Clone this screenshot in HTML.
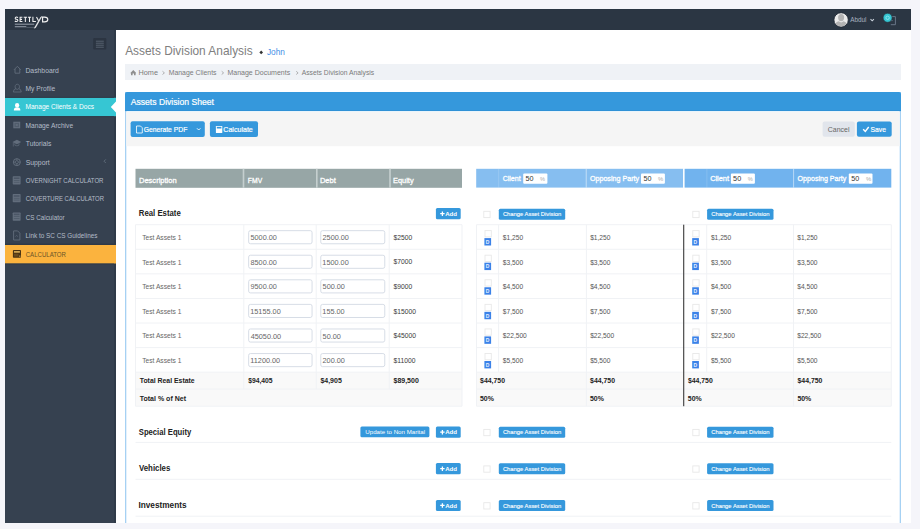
<!DOCTYPE html><html><head><meta charset="utf-8"><style>html,body{margin:0;padding:0;width:920px;height:529px;overflow:hidden;background:#f5f5fa;font-family:"Liberation Sans",sans-serif}</style></head><body><svg width="920" height="529" viewBox="0 0 920 529" style="display:block" font-family="Liberation Sans, sans-serif"><rect x="0.00" y="0.00" width="920.00" height="529.00" fill="#f5f5fa"/>
<rect x="5.00" y="9.00" width="906.00" height="21.00" fill="#2b3643"/>
<rect x="5.00" y="30.00" width="111.00" height="493.00" fill="#364150"/>
<rect x="114.00" y="30.00" width="2.00" height="493.00" fill="#2f3a48"/>
<rect x="116.00" y="30.00" width="795.00" height="493.00" fill="#ffffff"/>
<path d="M17.9 17.7 Q17.5 17.0 16.4 17.0 Q15.2 17.0 15.2 18.15 Q15.2 19.15 16.5 19.35 Q17.9 19.55 17.9 20.6 Q17.9 21.55 16.4 21.55 Q15.3 21.55 14.9 20.9 M22.4 17.3 H20.1 V21.4 H22.4 M20.1 19.35 H22 M23.7 17.3 H27 M25.35 17.3 V21.9 M27.9 17.3 H31.1 M29.5 17.3 V21.9 M32.9 16.8 V21.4 H35.9" stroke="#f2f2f2" stroke-width="1.05" fill="none"/>
<path d="M36.5 16.9 L38.5 20.7" stroke="#f2f2f2" stroke-width="1.1" fill="none"/>
<path d="M41.8 16.6 L40.9 16.9 L34.3 28.2 L35.6 27.6 Z" fill="#ffffff" stroke="#fff" stroke-width="0.5"/>
<path d="M42.6 17.1 H44.6 Q47.8 17.1 47.8 19.45 Q47.8 21.8 44.6 21.8 H42.6 Z" stroke="#f2f2f2" stroke-width="1.15" fill="none"/>
<rect x="14.80" y="23.60" width="19.40" height="1.30" fill="#7f8894"/>
<rect x="14.80" y="26.00" width="11.50" height="1.30" fill="#7f8894"/>
<rect x="26.30" y="27.10" width="7.90" height="0.50" fill="#6f7884"/>
<circle cx="841.1" cy="19.9" r="7.2" fill="#ebebeb" stroke="#1d2632" stroke-width="0.9"/>
<clipPath id="av"><circle cx="841.1" cy="19.9" r="6.6"/></clipPath>
<g clip-path="url(#av)" fill="#b3b3b3"><ellipse cx="841.1" cy="17.6" rx="3" ry="3.6"/><path d="M834 27.5 Q834.5 22.2 838.6 21.2 L841.1 22.6 L843.6 21.2 Q847.7 22.2 848.2 27.5 Z"/></g>
<text x="850.20" y="22.30" font-size="6.30" fill="#a9b3c1" textLength="16.13" lengthAdjust="spacingAndGlyphs">Abdul</text>
<path d="M870.5 19.1 L872.2 20.8 L873.9 19.1" stroke="#c8d0da" stroke-width="1.1" fill="none"/>
<path d="M890.8 16.6 H895.4 V24.7 H890.8 M892.6 20.6 H889.5" stroke="#6f7d8f" stroke-width="0.9" fill="none"/>
<circle cx="887.6" cy="17.8" r="4.5" fill="#36c6d3" stroke="#232d39" stroke-width="0.6"/>
<circle cx="887.6" cy="17.8" r="1.7" fill="none" stroke="#a8eef4" stroke-width="0.7"/>
<rect x="93.20" y="38.10" width="13.10" height="11.40" fill="#2c3542" rx="1.00"/>
<rect x="95.90" y="40.70" width="7.90" height="1.00" fill="#56616f"/>
<rect x="95.90" y="42.70" width="7.90" height="1.00" fill="#56616f"/>
<rect x="95.90" y="44.70" width="7.90" height="1.00" fill="#56616f"/>
<rect x="95.90" y="46.70" width="7.90" height="1.00" fill="#56616f"/>
<text x="25.46" y="72.50" font-size="6.70" fill="#b4bcc8" textLength="33.30" lengthAdjust="spacingAndGlyphs">Dashboard</text>
<text x="25.46" y="90.90" font-size="6.70" fill="#b4bcc8" textLength="29.78" lengthAdjust="spacingAndGlyphs">My Profile</text>
<rect x="5.00" y="97.80" width="111.00" height="18.40" fill="#36c6d3"/>
<text x="25.48" y="109.30" font-size="6.70" fill="#ffffff" textLength="68.55" lengthAdjust="spacingAndGlyphs">Manage Clients &amp; Docs</text>
<text x="25.47" y="127.70" font-size="6.70" fill="#b4bcc8" textLength="47.64" lengthAdjust="spacingAndGlyphs">Manage Archive</text>
<text x="25.87" y="146.10" font-size="6.70" fill="#b4bcc8" textLength="25.45" lengthAdjust="spacingAndGlyphs">Tutorials</text>
<text x="25.69" y="164.50" font-size="6.70" fill="#b4bcc8" textLength="23.96" lengthAdjust="spacingAndGlyphs">Support</text>
<text x="25.73" y="182.90" font-size="6.70" fill="#b4bcc8" textLength="77.75" lengthAdjust="spacingAndGlyphs">OVERNIGHT CALCULATOR</text>
<text x="25.70" y="201.30" font-size="6.70" fill="#b4bcc8" textLength="78.36" lengthAdjust="spacingAndGlyphs">COVERTURE CALCULATOR</text>
<text x="25.69" y="219.70" font-size="6.70" fill="#b4bcc8" textLength="38.84" lengthAdjust="spacingAndGlyphs">CS Calculator</text>
<text x="25.49" y="238.10" font-size="6.70" fill="#b4bcc8" textLength="72.02" lengthAdjust="spacingAndGlyphs">Link to SC CS Guidelines</text>
<rect x="5.00" y="245.00" width="111.00" height="18.50" fill="#fbb33e"/>
<text x="25.70" y="256.50" font-size="6.70" fill="#6b5428" textLength="40.29" lengthAdjust="spacingAndGlyphs">CALCULATOR</text>
<path d="M14 69.8 L17.4 66.3 L20.8 69.8 M15 69 V73.2 H19.8 V69" stroke="#626d7c" stroke-width="0.9" fill="none"/>
<path d="M17.3 84.2 A2.2 2.6 0 1 1 17.29 84.2 Z M13.3 92 Q13.6 88.9 15.9 88.7 M21.3 92 Q21 88.9 18.7 88.7 M13.3 92 H21.3" stroke="#626d7c" stroke-width="0.8" fill="none"/>
<ellipse cx="17.1" cy="105.2" rx="2.1" ry="2.2" fill="#fff"/><path d="M13.8 110.4 Q13.8 107.3 17.1 107.3 Q20.4 107.3 20.4 110.4 Z" fill="#fff"/>
<rect x="13.30" y="121.70" width="6.90" height="6.60" fill="#626d7c"/>
<rect x="14.50" y="122.90" width="4.50" height="4.20" fill="#505c6b"/>
<rect x="15.70" y="124.10" width="2.10" height="1.80" fill="#626d7c"/>
<path d="M12.5 142 L16.9 139.8 L21.3 142 L16.9 144.2 Z" fill="#626d7c"/><path d="M14.8 143.3 V145.2 Q16.9 146.5 19 145.2 V143.3 M13.3 142.3 V146.5" stroke="#626d7c" stroke-width="0.7" fill="none"/>
<circle cx="16.85" cy="162.15" r="3.5" fill="none" stroke="#626d7c" stroke-width="1"/><circle cx="16.85" cy="162.15" r="1.5" fill="none" stroke="#626d7c" stroke-width="0.8"/><path d="M16.85 158.6 V160.6 M16.85 163.7 V165.7 M13.3 162.15 H15.3 M18.4 162.15 H20.4" stroke="#626d7c" stroke-width="0.9"/>
<rect x="12.70" y="176.30" width="7.90" height="8.20" fill="#626d7c" rx="0.70"/>
<rect x="13.80" y="177.40" width="5.70" height="1.60" fill="#4b5666"/>
<rect x="13.80" y="180.10" width="5.70" height="0.70" fill="#4b5666"/>
<rect x="13.80" y="181.90" width="5.70" height="0.70" fill="#4b5666"/>
<rect x="12.70" y="194.10" width="7.90" height="8.20" fill="#626d7c" rx="0.70"/>
<rect x="13.80" y="195.20" width="5.70" height="1.60" fill="#4b5666"/>
<rect x="13.80" y="197.90" width="5.70" height="0.70" fill="#4b5666"/>
<rect x="13.80" y="199.70" width="5.70" height="0.70" fill="#4b5666"/>
<rect x="12.70" y="212.50" width="7.90" height="8.20" fill="#626d7c" rx="0.70"/>
<rect x="13.80" y="213.60" width="5.70" height="1.60" fill="#4b5666"/>
<rect x="13.80" y="216.30" width="5.70" height="0.70" fill="#4b5666"/>
<rect x="13.80" y="218.10" width="5.70" height="0.70" fill="#4b5666"/>
<path d="M13.6 230.9 H17.6 L19.9 233.2 V240 H13.6 Z" fill="none" stroke="#626d7c" stroke-width="0.9"/><path d="M15.4 236.5 Q16.5 234.5 17.8 236.5" stroke="#626d7c" stroke-width="0.7" fill="none"/>
<rect x="12.90" y="250.10" width="8.10" height="7.60" fill="#4a3414" rx="0.80"/>
<rect x="14.00" y="251.20" width="5.90" height="1.40" fill="#f0c060"/>
<rect x="14.00" y="253.70" width="4.50" height="2.90" fill="#6a4b1d"/>
<rect x="19.20" y="255.40" width="1.20" height="1.70" fill="#b08a3c"/>
<rect x="5.00" y="243.60" width="109.00" height="1.20" fill="#2e3846"/>
<rect x="5.00" y="96.80" width="109.00" height="1.00" fill="#2f3a48"/>
<rect x="5.00" y="116.20" width="109.00" height="0.90" fill="#2f3a48"/>
<rect x="5.00" y="263.60" width="109.00" height="0.90" fill="#2f3a48"/>
<path d="M116 101.5 L110.8 107 L116 112.5 Z" fill="#ffffff"/>
<path d="M105.8 159.4 L104 161.2 L105.8 163" stroke="#6f7b8a" stroke-width="0.7" fill="none"/>
<text x="125.20" y="54.70" font-size="13.50" fill="#808080" textLength="127.43" lengthAdjust="spacingAndGlyphs">Assets Division Analysis</text>
<rect x="259.9" y="51.1" width="2.6" height="2.6" fill="#333" transform="rotate(45 261.2 52.4)"/>
<text x="266.88" y="55.00" font-size="9.00" fill="#4490e6" textLength="17.99" lengthAdjust="spacingAndGlyphs">John</text>
<rect x="125.00" y="64.00" width="776.00" height="16.00" fill="#eff2f6"/>
<path d="M130.4 72.9 L133.3 70.1 L136.2 72.9 L135.6 73.4 V75.2 H134 V73.6 H132.6 V75.2 H131 V73.4 Z" fill="#8f8f8f"/>
<text x="138.52" y="74.70" font-size="7.20" fill="#7a7a7a" textLength="19.43" lengthAdjust="spacingAndGlyphs">Home</text>
<path d="M162.50 71.3 L164.40 72.9 L162.50 74.5" stroke="#9a9a9a" stroke-width="0.75" fill="none"/>
<text x="168.75" y="74.70" font-size="7.20" fill="#7a7a7a" textLength="47.78" lengthAdjust="spacingAndGlyphs">Manage Clients</text>
<path d="M221.70 71.3 L223.60 72.9 L221.70 74.5" stroke="#9a9a9a" stroke-width="0.75" fill="none"/>
<text x="227.44" y="74.70" font-size="7.20" fill="#7a7a7a" textLength="62.70" lengthAdjust="spacingAndGlyphs">Manage Documents</text>
<path d="M296.20 71.3 L298.10 72.9 L296.20 74.5" stroke="#9a9a9a" stroke-width="0.75" fill="none"/>
<text x="301.70" y="74.70" font-size="7.20" fill="#7a7a7a" textLength="72.45" lengthAdjust="spacingAndGlyphs">Assets Division Analysis</text>
<rect x="125.00" y="92.00" width="776.00" height="438.00" fill="#a6d1f3"/>
<rect x="126.30" y="111.00" width="773.40" height="419.00" fill="#ffffff"/>
<rect x="125.00" y="92.00" width="776.00" height="19.00" fill="#3598dc" rx="2.00"/>
<rect x="125.00" y="100.00" width="776.00" height="11.00" fill="#3598dc"/>
<text x="130.70" y="105.00" font-size="9.00" fill="#ffffff" textLength="83.25" lengthAdjust="spacingAndGlyphs" stroke="#fff" stroke-width="0.2">Assets Division Sheet</text>
<rect x="125.00" y="110.20" width="776.00" height="0.90" fill="#2f8fd5"/>
<rect x="126.30" y="112.00" width="773.40" height="34.20" fill="#f5f5f5"/>
<rect x="130.60" y="121.20" width="74.20" height="15.70" fill="#3598dc" rx="2.00"/>
<text x="143.66" y="132.10" font-size="7.80" fill="#fff" textLength="43.63" lengthAdjust="spacingAndGlyphs" stroke="#fff" stroke-width="0.2">Generate PDF</text>
<path d="M136.5 126 H140.5 L142.3 127.8 V133 H136.5 Z" fill="none" stroke="#fff" stroke-width="0.8"/>
<path d="M197 128.3 L198.7 130 L200.4 128.3" stroke="#fff" stroke-width="0.9" fill="none"/>
<rect x="209.90" y="121.20" width="48.10" height="15.70" fill="#3598dc" rx="2.00"/>
<rect x="215.90" y="126.00" width="6.40" height="7.00" fill="#fff" rx="0.60"/>
<rect x="216.80" y="126.80" width="4.60" height="1.70" fill="#3598dc"/>
<text x="223.35" y="132.10" font-size="7.80" fill="#fff" textLength="29.46" lengthAdjust="spacingAndGlyphs" stroke="#fff" stroke-width="0.2">Calculate</text>
<rect x="822.60" y="121.50" width="32.20" height="15.30" fill="#e1e5ec" rx="2.00"/>
<text x="827.85" y="132.00" font-size="7.50" fill="#666666" textLength="21.62" lengthAdjust="spacingAndGlyphs">Cancel</text>
<rect x="856.90" y="121.50" width="34.80" height="15.30" fill="#3598dc" rx="2.00"/>
<path d="M863.2 129.2 L865.3 131.4 L868.7 127" stroke="#fff" stroke-width="1.4" fill="none"/>
<text x="870.50" y="132.00" font-size="7.50" fill="#fff" textLength="15.40" lengthAdjust="spacingAndGlyphs" stroke="#fff" stroke-width="0.2">Save</text>
<rect x="135.50" y="168.80" width="326.50" height="19.00" fill="#97a6a6"/>
<rect x="242.70" y="168.80" width="1.60" height="19.00" fill="#c5cfcf"/>
<rect x="316.00" y="168.80" width="1.60" height="19.00" fill="#c5cfcf"/>
<rect x="389.20" y="168.80" width="1.60" height="19.00" fill="#c5cfcf"/>
<text x="139.00" y="182.50" font-size="7.60" fill="#fff" textLength="37.61" lengthAdjust="spacingAndGlyphs" stroke="#fff" stroke-width="0.3">Description</text>
<text x="247.86" y="182.50" font-size="7.60" fill="#fff" textLength="14.28" lengthAdjust="spacingAndGlyphs" stroke="#fff" stroke-width="0.3">FMV</text>
<text x="319.90" y="182.50" font-size="7.60" fill="#fff" textLength="15.96" lengthAdjust="spacingAndGlyphs" stroke="#fff" stroke-width="0.3">Debt</text>
<text x="393.01" y="182.50" font-size="7.60" fill="#fff" textLength="20.59" lengthAdjust="spacingAndGlyphs" stroke="#fff" stroke-width="0.3">Equity</text>
<rect x="476.20" y="168.80" width="207.00" height="18.80" fill="#86bef0"/>
<rect x="498.30" y="168.80" width="0.80" height="18.80" fill="rgba(255,255,255,0.18)"/>
<rect x="585.70" y="168.80" width="1.10" height="18.80" fill="rgba(255,255,255,0.45)"/>
<text x="502.65" y="180.60" font-size="7.40" fill="#fff" textLength="18.00" lengthAdjust="spacingAndGlyphs" stroke="#fff" stroke-width="0.3">Client</text>
<rect x="523.20" y="173.40" width="24.20" height="10.30" fill="#fff" rx="1.00"/>
<text x="525.41" y="181.20" font-size="6.80" fill="#333" textLength="8.06" lengthAdjust="spacingAndGlyphs">50</text>
<text x="540.00" y="181.20" font-size="5.50" fill="#aaa" textLength="4.99" lengthAdjust="spacingAndGlyphs">%</text>
<text x="589.88" y="180.60" font-size="7.40" fill="#fff" textLength="49.31" lengthAdjust="spacingAndGlyphs" stroke="#fff" stroke-width="0.3">Opposing Party</text>
<rect x="641.00" y="173.40" width="23.90" height="10.30" fill="#fff" rx="1.00"/>
<text x="643.41" y="181.20" font-size="6.80" fill="#333" textLength="7.95" lengthAdjust="spacingAndGlyphs">50</text>
<text x="658.10" y="181.20" font-size="5.50" fill="#aaa" textLength="5.20" lengthAdjust="spacingAndGlyphs">%</text>
<rect x="683.20" y="168.80" width="1.40" height="18.80" fill="#ffffff"/>
<rect x="684.60" y="168.80" width="206.70" height="18.80" fill="#71b3ee"/>
<rect x="706.50" y="168.80" width="0.80" height="18.80" fill="rgba(255,255,255,0.18)"/>
<rect x="793.00" y="168.80" width="1.10" height="18.80" fill="rgba(255,255,255,0.45)"/>
<text x="710.13" y="180.60" font-size="7.40" fill="#fff" textLength="18.92" lengthAdjust="spacingAndGlyphs" stroke="#fff" stroke-width="0.3">Client</text>
<rect x="730.90" y="173.40" width="24.00" height="10.30" fill="#fff" rx="1.00"/>
<text x="733.11" y="181.20" font-size="6.80" fill="#333" textLength="8.06" lengthAdjust="spacingAndGlyphs">50</text>
<text x="747.70" y="181.20" font-size="5.50" fill="#aaa" textLength="4.99" lengthAdjust="spacingAndGlyphs">%</text>
<text x="797.58" y="180.60" font-size="7.40" fill="#fff" textLength="48.80" lengthAdjust="spacingAndGlyphs" stroke="#fff" stroke-width="0.3">Opposing Party</text>
<rect x="848.80" y="173.40" width="23.70" height="10.30" fill="#fff" rx="1.00"/>
<text x="851.21" y="181.20" font-size="6.80" fill="#333" textLength="7.95" lengthAdjust="spacingAndGlyphs">50</text>
<text x="865.90" y="181.20" font-size="5.50" fill="#aaa" textLength="5.20" lengthAdjust="spacingAndGlyphs">%</text>
<text x="138.79" y="216.00" font-size="8.20" fill="#222" font-weight="bold" textLength="41.99" lengthAdjust="spacingAndGlyphs">Real Estate</text>
<rect x="435.90" y="208.10" width="24.80" height="11.10" fill="#3598dc" rx="1.50"/>
<path d="M442.4 211.40 V215.90 M440.2 213.65 H444.6" stroke="#fff" stroke-width="1.3"/>
<text x="445.15" y="215.70" font-size="6.20" fill="#fff" font-weight="bold" textLength="11.84" lengthAdjust="spacingAndGlyphs">Add</text>
<rect x="483.80" y="211.30" width="6.3" height="6.3" fill="#fff" stroke="#e8e8e8" stroke-width="0.9"/>
<rect x="498.80" y="208.70" width="66.40" height="11.10" fill="#3598dc" rx="1.50"/>
<text x="502.91" y="216.40" font-size="6.20" fill="#fff" textLength="58.27" lengthAdjust="spacingAndGlyphs" stroke="#fff" stroke-width="0.12">Change Asset Division</text>
<rect x="692.80" y="211.30" width="6.3" height="6.3" fill="#fff" stroke="#e8e8e8" stroke-width="0.9"/>
<rect x="707.10" y="208.70" width="66.40" height="11.10" fill="#3598dc" rx="1.50"/>
<text x="711.21" y="216.40" font-size="6.20" fill="#fff" textLength="58.27" lengthAdjust="spacingAndGlyphs" stroke="#fff" stroke-width="0.12">Change Asset Division</text>
<rect x="135.50" y="372.20" width="326.50" height="34.00" fill="#f9f9f9"/>
<rect x="476.50" y="372.20" width="414.80" height="34.00" fill="#f9f9f9"/>
<rect x="135.50" y="224.20" width="326.50" height="1.00" fill="#f0f2f5"/>
<rect x="476.50" y="224.20" width="414.80" height="1.00" fill="#f0f2f5"/>
<rect x="135.50" y="248.78" width="326.50" height="1.00" fill="#f0f2f5"/>
<rect x="476.50" y="248.78" width="414.80" height="1.00" fill="#f0f2f5"/>
<rect x="135.50" y="273.36" width="326.50" height="1.00" fill="#f0f2f5"/>
<rect x="476.50" y="273.36" width="414.80" height="1.00" fill="#f0f2f5"/>
<rect x="135.50" y="297.94" width="326.50" height="1.00" fill="#f0f2f5"/>
<rect x="476.50" y="297.94" width="414.80" height="1.00" fill="#f0f2f5"/>
<rect x="135.50" y="322.52" width="326.50" height="1.00" fill="#f0f2f5"/>
<rect x="476.50" y="322.52" width="414.80" height="1.00" fill="#f0f2f5"/>
<rect x="135.50" y="347.10" width="326.50" height="1.00" fill="#f0f2f5"/>
<rect x="476.50" y="347.10" width="414.80" height="1.00" fill="#f0f2f5"/>
<rect x="135.50" y="371.68" width="326.50" height="1.00" fill="#f0f2f5"/>
<rect x="476.50" y="371.68" width="414.80" height="1.00" fill="#f0f2f5"/>
<rect x="135.50" y="388.60" width="326.50" height="1.00" fill="#f0f2f5"/>
<rect x="476.50" y="388.60" width="414.80" height="1.00" fill="#f0f2f5"/>
<rect x="135.50" y="405.70" width="326.50" height="1.00" fill="#f0f2f5"/>
<rect x="476.50" y="405.70" width="414.80" height="1.00" fill="#f0f2f5"/>
<rect x="135.00" y="224.70" width="1.00" height="181.50" fill="#f0f2f5"/>
<rect x="461.50" y="224.70" width="1.00" height="181.50" fill="#f0f2f5"/>
<rect x="243.30" y="224.70" width="1.00" height="164.40" fill="#f0f2f5"/>
<rect x="315.70" y="224.70" width="1.00" height="164.40" fill="#f0f2f5"/>
<rect x="388.70" y="224.70" width="1.00" height="164.40" fill="#f0f2f5"/>
<rect x="476.00" y="224.70" width="1.00" height="181.50" fill="#f0f2f5"/>
<rect x="890.80" y="224.70" width="1.00" height="181.50" fill="#f0f2f5"/>
<rect x="585.90" y="224.70" width="1.00" height="181.50" fill="#f0f2f5"/>
<rect x="793.00" y="224.70" width="1.00" height="181.50" fill="#f0f2f5"/>
<rect x="498.10" y="224.70" width="1.00" height="147.50" fill="#f0f2f5"/>
<rect x="706.20" y="224.70" width="1.00" height="147.50" fill="#f0f2f5"/>
<text x="142.27" y="240.00" font-size="7.10" fill="#666" textLength="39.14" lengthAdjust="spacingAndGlyphs">Test Assets 1</text>
<rect x="248.65" y="230.65" width="63.40" height="13.1" rx="1.8" fill="#fff" stroke="#d3d9e3" stroke-width="0.9"/>
<text x="250.51" y="240.30" font-size="7.30" fill="#666" textLength="26.39" lengthAdjust="spacingAndGlyphs">5000.00</text>
<rect x="320.75" y="230.65" width="64.00" height="13.1" rx="1.8" fill="#fff" stroke="#d3d9e3" stroke-width="0.9"/>
<text x="322.54" y="240.30" font-size="7.30" fill="#666" textLength="26.39" lengthAdjust="spacingAndGlyphs">2500.00</text>
<text x="393.53" y="239.80" font-size="7.10" fill="#3a3a3a" textLength="18.76" lengthAdjust="spacingAndGlyphs">$2500</text>
<rect x="485.00" y="230.60" width="6.3" height="6.3" fill="#fff" stroke="#e8e8e8" stroke-width="0.9"/>
<rect x="484.40" y="238.10" width="6.70" height="7.40" fill="#3b82e8"/>
<text x="485.77" y="243.80" font-size="4.60" fill="#e8f0ff" font-weight="bold" textLength="3.64" lengthAdjust="spacingAndGlyphs">D</text>
<text x="502.83" y="240.00" font-size="7.10" fill="#555" textLength="20.30" lengthAdjust="spacingAndGlyphs">$1,250</text>
<text x="590.13" y="240.00" font-size="7.10" fill="#555" textLength="20.30" lengthAdjust="spacingAndGlyphs">$1,250</text>
<rect x="692.80" y="230.60" width="6.3" height="6.3" fill="#fff" stroke="#e8e8e8" stroke-width="0.9"/>
<rect x="692.20" y="238.10" width="6.70" height="7.40" fill="#3b82e8"/>
<text x="693.57" y="243.80" font-size="4.60" fill="#e8f0ff" font-weight="bold" textLength="3.64" lengthAdjust="spacingAndGlyphs">D</text>
<text x="710.93" y="240.00" font-size="7.10" fill="#555" textLength="20.30" lengthAdjust="spacingAndGlyphs">$1,250</text>
<text x="797.23" y="240.00" font-size="7.10" fill="#555" textLength="20.30" lengthAdjust="spacingAndGlyphs">$1,250</text>
<text x="142.27" y="264.58" font-size="7.10" fill="#666" textLength="39.14" lengthAdjust="spacingAndGlyphs">Test Assets 1</text>
<rect x="248.65" y="255.23" width="63.40" height="13.1" rx="1.8" fill="#fff" stroke="#d3d9e3" stroke-width="0.9"/>
<text x="250.47" y="264.88" font-size="7.30" fill="#666" textLength="26.39" lengthAdjust="spacingAndGlyphs">8500.00</text>
<rect x="320.75" y="255.23" width="64.00" height="13.1" rx="1.8" fill="#fff" stroke="#d3d9e3" stroke-width="0.9"/>
<text x="322.35" y="264.88" font-size="7.30" fill="#666" textLength="26.39" lengthAdjust="spacingAndGlyphs">1500.00</text>
<text x="393.53" y="264.38" font-size="7.10" fill="#3a3a3a" textLength="18.76" lengthAdjust="spacingAndGlyphs">$7000</text>
<rect x="485.00" y="255.18" width="6.3" height="6.3" fill="#fff" stroke="#e8e8e8" stroke-width="0.9"/>
<rect x="484.40" y="262.68" width="6.70" height="7.40" fill="#3b82e8"/>
<text x="485.77" y="268.38" font-size="4.60" fill="#e8f0ff" font-weight="bold" textLength="3.64" lengthAdjust="spacingAndGlyphs">D</text>
<text x="502.83" y="264.58" font-size="7.10" fill="#555" textLength="20.30" lengthAdjust="spacingAndGlyphs">$3,500</text>
<text x="590.13" y="264.58" font-size="7.10" fill="#555" textLength="20.30" lengthAdjust="spacingAndGlyphs">$3,500</text>
<rect x="692.80" y="255.18" width="6.3" height="6.3" fill="#fff" stroke="#e8e8e8" stroke-width="0.9"/>
<rect x="692.20" y="262.68" width="6.70" height="7.40" fill="#3b82e8"/>
<text x="693.57" y="268.38" font-size="4.60" fill="#e8f0ff" font-weight="bold" textLength="3.64" lengthAdjust="spacingAndGlyphs">D</text>
<text x="710.93" y="264.58" font-size="7.10" fill="#555" textLength="20.30" lengthAdjust="spacingAndGlyphs">$3,500</text>
<text x="797.23" y="264.58" font-size="7.10" fill="#555" textLength="20.30" lengthAdjust="spacingAndGlyphs">$3,500</text>
<text x="142.27" y="289.16" font-size="7.10" fill="#666" textLength="39.14" lengthAdjust="spacingAndGlyphs">Test Assets 1</text>
<rect x="248.65" y="279.81" width="63.40" height="13.1" rx="1.8" fill="#fff" stroke="#d3d9e3" stroke-width="0.9"/>
<text x="250.47" y="289.46" font-size="7.30" fill="#666" textLength="26.39" lengthAdjust="spacingAndGlyphs">9500.00</text>
<rect x="320.75" y="279.81" width="64.00" height="13.1" rx="1.8" fill="#fff" stroke="#d3d9e3" stroke-width="0.9"/>
<text x="322.61" y="289.46" font-size="7.30" fill="#666" textLength="22.33" lengthAdjust="spacingAndGlyphs">500.00</text>
<text x="393.53" y="288.96" font-size="7.10" fill="#3a3a3a" textLength="18.76" lengthAdjust="spacingAndGlyphs">$9000</text>
<rect x="485.00" y="279.76" width="6.3" height="6.3" fill="#fff" stroke="#e8e8e8" stroke-width="0.9"/>
<rect x="484.40" y="287.26" width="6.70" height="7.40" fill="#3b82e8"/>
<text x="485.77" y="292.96" font-size="4.60" fill="#e8f0ff" font-weight="bold" textLength="3.64" lengthAdjust="spacingAndGlyphs">D</text>
<text x="502.83" y="289.16" font-size="7.10" fill="#555" textLength="20.30" lengthAdjust="spacingAndGlyphs">$4,500</text>
<text x="590.13" y="289.16" font-size="7.10" fill="#555" textLength="20.30" lengthAdjust="spacingAndGlyphs">$4,500</text>
<rect x="692.80" y="279.76" width="6.3" height="6.3" fill="#fff" stroke="#e8e8e8" stroke-width="0.9"/>
<rect x="692.20" y="287.26" width="6.70" height="7.40" fill="#3b82e8"/>
<text x="693.57" y="292.96" font-size="4.60" fill="#e8f0ff" font-weight="bold" textLength="3.64" lengthAdjust="spacingAndGlyphs">D</text>
<text x="710.93" y="289.16" font-size="7.10" fill="#555" textLength="20.30" lengthAdjust="spacingAndGlyphs">$4,500</text>
<text x="797.23" y="289.16" font-size="7.10" fill="#555" textLength="20.30" lengthAdjust="spacingAndGlyphs">$4,500</text>
<text x="142.27" y="313.74" font-size="7.10" fill="#666" textLength="39.14" lengthAdjust="spacingAndGlyphs">Test Assets 1</text>
<rect x="248.65" y="304.39" width="63.40" height="13.1" rx="1.8" fill="#fff" stroke="#d3d9e3" stroke-width="0.9"/>
<text x="250.25" y="314.04" font-size="7.30" fill="#666" textLength="30.45" lengthAdjust="spacingAndGlyphs">15155.00</text>
<rect x="320.75" y="304.39" width="64.00" height="13.1" rx="1.8" fill="#fff" stroke="#d3d9e3" stroke-width="0.9"/>
<text x="322.35" y="314.04" font-size="7.30" fill="#666" textLength="22.33" lengthAdjust="spacingAndGlyphs">155.00</text>
<text x="393.53" y="313.54" font-size="7.10" fill="#3a3a3a" textLength="22.51" lengthAdjust="spacingAndGlyphs">$15000</text>
<rect x="485.00" y="304.34" width="6.3" height="6.3" fill="#fff" stroke="#e8e8e8" stroke-width="0.9"/>
<rect x="484.40" y="311.84" width="6.70" height="7.40" fill="#3b82e8"/>
<text x="485.77" y="317.54" font-size="4.60" fill="#e8f0ff" font-weight="bold" textLength="3.64" lengthAdjust="spacingAndGlyphs">D</text>
<text x="502.83" y="313.74" font-size="7.10" fill="#555" textLength="20.30" lengthAdjust="spacingAndGlyphs">$7,500</text>
<text x="590.13" y="313.74" font-size="7.10" fill="#555" textLength="20.30" lengthAdjust="spacingAndGlyphs">$7,500</text>
<rect x="692.80" y="304.34" width="6.3" height="6.3" fill="#fff" stroke="#e8e8e8" stroke-width="0.9"/>
<rect x="692.20" y="311.84" width="6.70" height="7.40" fill="#3b82e8"/>
<text x="693.57" y="317.54" font-size="4.60" fill="#e8f0ff" font-weight="bold" textLength="3.64" lengthAdjust="spacingAndGlyphs">D</text>
<text x="710.93" y="313.74" font-size="7.10" fill="#555" textLength="20.30" lengthAdjust="spacingAndGlyphs">$7,500</text>
<text x="797.23" y="313.74" font-size="7.10" fill="#555" textLength="20.30" lengthAdjust="spacingAndGlyphs">$7,500</text>
<text x="142.27" y="338.32" font-size="7.10" fill="#666" textLength="39.14" lengthAdjust="spacingAndGlyphs">Test Assets 1</text>
<rect x="248.65" y="328.97" width="63.40" height="13.1" rx="1.8" fill="#fff" stroke="#d3d9e3" stroke-width="0.9"/>
<text x="250.65" y="338.62" font-size="7.30" fill="#666" textLength="30.45" lengthAdjust="spacingAndGlyphs">45050.00</text>
<rect x="320.75" y="328.97" width="64.00" height="13.1" rx="1.8" fill="#fff" stroke="#d3d9e3" stroke-width="0.9"/>
<text x="322.61" y="338.62" font-size="7.30" fill="#666" textLength="18.27" lengthAdjust="spacingAndGlyphs">50.00</text>
<text x="393.53" y="338.12" font-size="7.10" fill="#3a3a3a" textLength="22.51" lengthAdjust="spacingAndGlyphs">$45000</text>
<rect x="485.00" y="328.92" width="6.3" height="6.3" fill="#fff" stroke="#e8e8e8" stroke-width="0.9"/>
<rect x="484.40" y="336.42" width="6.70" height="7.40" fill="#3b82e8"/>
<text x="485.77" y="342.12" font-size="4.60" fill="#e8f0ff" font-weight="bold" textLength="3.64" lengthAdjust="spacingAndGlyphs">D</text>
<text x="502.83" y="338.32" font-size="7.10" fill="#555" textLength="24.00" lengthAdjust="spacingAndGlyphs">$22,500</text>
<text x="590.13" y="338.32" font-size="7.10" fill="#555" textLength="24.00" lengthAdjust="spacingAndGlyphs">$22,500</text>
<rect x="692.80" y="328.92" width="6.3" height="6.3" fill="#fff" stroke="#e8e8e8" stroke-width="0.9"/>
<rect x="692.20" y="336.42" width="6.70" height="7.40" fill="#3b82e8"/>
<text x="693.57" y="342.12" font-size="4.60" fill="#e8f0ff" font-weight="bold" textLength="3.64" lengthAdjust="spacingAndGlyphs">D</text>
<text x="710.93" y="338.32" font-size="7.10" fill="#555" textLength="24.00" lengthAdjust="spacingAndGlyphs">$22,500</text>
<text x="797.23" y="338.32" font-size="7.10" fill="#555" textLength="24.00" lengthAdjust="spacingAndGlyphs">$22,500</text>
<text x="142.27" y="362.90" font-size="7.10" fill="#666" textLength="39.14" lengthAdjust="spacingAndGlyphs">Test Assets 1</text>
<rect x="248.65" y="353.55" width="63.40" height="13.1" rx="1.8" fill="#fff" stroke="#d3d9e3" stroke-width="0.9"/>
<text x="250.25" y="363.20" font-size="7.30" fill="#666" textLength="29.91" lengthAdjust="spacingAndGlyphs">11200.00</text>
<rect x="320.75" y="353.55" width="64.00" height="13.1" rx="1.8" fill="#fff" stroke="#d3d9e3" stroke-width="0.9"/>
<text x="322.54" y="363.20" font-size="7.30" fill="#666" textLength="22.33" lengthAdjust="spacingAndGlyphs">200.00</text>
<text x="393.53" y="362.70" font-size="7.10" fill="#3a3a3a" textLength="22.01" lengthAdjust="spacingAndGlyphs">$11000</text>
<rect x="485.00" y="353.50" width="6.3" height="6.3" fill="#fff" stroke="#e8e8e8" stroke-width="0.9"/>
<rect x="484.40" y="361.00" width="6.70" height="7.40" fill="#3b82e8"/>
<text x="485.77" y="366.70" font-size="4.60" fill="#e8f0ff" font-weight="bold" textLength="3.64" lengthAdjust="spacingAndGlyphs">D</text>
<text x="502.83" y="362.90" font-size="7.10" fill="#555" textLength="20.30" lengthAdjust="spacingAndGlyphs">$5,500</text>
<text x="590.13" y="362.90" font-size="7.10" fill="#555" textLength="20.30" lengthAdjust="spacingAndGlyphs">$5,500</text>
<rect x="692.80" y="353.50" width="6.3" height="6.3" fill="#fff" stroke="#e8e8e8" stroke-width="0.9"/>
<rect x="692.20" y="361.00" width="6.70" height="7.40" fill="#3b82e8"/>
<text x="693.57" y="366.70" font-size="4.60" fill="#e8f0ff" font-weight="bold" textLength="3.64" lengthAdjust="spacingAndGlyphs">D</text>
<text x="710.93" y="362.90" font-size="7.10" fill="#555" textLength="20.30" lengthAdjust="spacingAndGlyphs">$5,500</text>
<text x="797.23" y="362.90" font-size="7.10" fill="#555" textLength="20.30" lengthAdjust="spacingAndGlyphs">$5,500</text>
<rect x="683.00" y="224.70" width="1.30" height="181.50" fill="#575757"/>
<text x="139.73" y="383.40" font-size="7.00" fill="#222" font-weight="bold" textLength="54.90" lengthAdjust="spacingAndGlyphs">Total Real Estate</text>
<text x="139.73" y="400.50" font-size="7.00" fill="#222" font-weight="bold" textLength="46.26" lengthAdjust="spacingAndGlyphs">Total % of Net</text>
<text x="248.20" y="383.40" font-size="7.00" fill="#222" font-weight="bold" textLength="24.37" lengthAdjust="spacingAndGlyphs">$94,405</text>
<text x="320.39" y="383.40" font-size="7.00" fill="#222" font-weight="bold" textLength="21.41" lengthAdjust="spacingAndGlyphs">$4,905</text>
<text x="393.50" y="383.40" font-size="7.00" fill="#222" font-weight="bold" textLength="25.30" lengthAdjust="spacingAndGlyphs">$89,500</text>
<text x="480.10" y="383.40" font-size="7.00" fill="#222" font-weight="bold" textLength="24.88" lengthAdjust="spacingAndGlyphs">$44,750</text>
<text x="590.10" y="383.40" font-size="7.00" fill="#222" font-weight="bold" textLength="24.88" lengthAdjust="spacingAndGlyphs">$44,750</text>
<text x="479.99" y="400.60" font-size="7.00" fill="#222" font-weight="bold" textLength="13.89" lengthAdjust="spacingAndGlyphs">50%</text>
<text x="589.99" y="400.60" font-size="7.00" fill="#222" font-weight="bold" textLength="13.89" lengthAdjust="spacingAndGlyphs">50%</text>
<text x="687.90" y="383.40" font-size="7.00" fill="#222" font-weight="bold" textLength="24.88" lengthAdjust="spacingAndGlyphs">$44,750</text>
<text x="797.50" y="383.40" font-size="7.00" fill="#222" font-weight="bold" textLength="24.88" lengthAdjust="spacingAndGlyphs">$44,750</text>
<text x="687.79" y="400.60" font-size="7.00" fill="#222" font-weight="bold" textLength="13.89" lengthAdjust="spacingAndGlyphs">50%</text>
<text x="797.39" y="400.60" font-size="7.00" fill="#222" font-weight="bold" textLength="13.89" lengthAdjust="spacingAndGlyphs">50%</text>
<text x="138.77" y="434.70" font-size="8.20" fill="#222" font-weight="bold" textLength="52.47" lengthAdjust="spacingAndGlyphs">Special Equity</text>
<rect x="135.50" y="441.90" width="755.80" height="1.00" fill="#f0f2f5"/>
<rect x="435.90" y="426.60" width="24.80" height="11.10" fill="#3598dc" rx="1.50"/>
<path d="M442.4 429.90 V434.40 M440.2 432.15 H444.6" stroke="#fff" stroke-width="1.3"/>
<text x="445.15" y="434.20" font-size="6.20" fill="#fff" font-weight="bold" textLength="11.84" lengthAdjust="spacingAndGlyphs">Add</text>
<rect x="360.40" y="426.60" width="69.00" height="10.60" fill="#3598dc" rx="1.50"/>
<text x="365.34" y="434.10" font-size="6.20" fill="#fff" textLength="59.77" lengthAdjust="spacingAndGlyphs">Update to Non Marital</text>
<rect x="483.80" y="429.40" width="6.3" height="6.3" fill="#fff" stroke="#e8e8e8" stroke-width="0.9"/>
<rect x="498.80" y="426.70" width="66.40" height="11.10" fill="#3598dc" rx="1.50"/>
<text x="502.91" y="434.40" font-size="6.20" fill="#fff" textLength="58.27" lengthAdjust="spacingAndGlyphs" stroke="#fff" stroke-width="0.12">Change Asset Division</text>
<rect x="692.80" y="429.40" width="6.3" height="6.3" fill="#fff" stroke="#e8e8e8" stroke-width="0.9"/>
<rect x="707.10" y="426.70" width="66.40" height="11.10" fill="#3598dc" rx="1.50"/>
<text x="711.21" y="434.40" font-size="6.20" fill="#fff" textLength="58.27" lengthAdjust="spacingAndGlyphs" stroke="#fff" stroke-width="0.12">Change Asset Division</text>
<text x="138.96" y="471.20" font-size="8.20" fill="#222" font-weight="bold" textLength="31.38" lengthAdjust="spacingAndGlyphs">Vehicles</text>
<rect x="135.50" y="478.80" width="755.80" height="1.00" fill="#f0f2f5"/>
<rect x="435.90" y="463.10" width="24.80" height="11.10" fill="#3598dc" rx="1.50"/>
<path d="M442.4 466.40 V470.90 M440.2 468.65 H444.6" stroke="#fff" stroke-width="1.3"/>
<text x="445.15" y="470.70" font-size="6.20" fill="#fff" font-weight="bold" textLength="11.84" lengthAdjust="spacingAndGlyphs">Add</text>
<rect x="483.80" y="465.90" width="6.3" height="6.3" fill="#fff" stroke="#e8e8e8" stroke-width="0.9"/>
<rect x="498.80" y="463.20" width="66.40" height="11.10" fill="#3598dc" rx="1.50"/>
<text x="502.91" y="470.90" font-size="6.20" fill="#fff" textLength="58.27" lengthAdjust="spacingAndGlyphs" stroke="#fff" stroke-width="0.12">Change Asset Division</text>
<rect x="692.80" y="465.90" width="6.3" height="6.3" fill="#fff" stroke="#e8e8e8" stroke-width="0.9"/>
<rect x="707.10" y="463.20" width="66.40" height="11.10" fill="#3598dc" rx="1.50"/>
<text x="711.21" y="470.90" font-size="6.20" fill="#fff" textLength="58.27" lengthAdjust="spacingAndGlyphs" stroke="#fff" stroke-width="0.12">Change Asset Division</text>
<text x="138.46" y="508.00" font-size="8.20" fill="#222" font-weight="bold" textLength="48.07" lengthAdjust="spacingAndGlyphs">Investments</text>
<rect x="135.50" y="515.70" width="755.80" height="1.00" fill="#f0f2f5"/>
<rect x="435.90" y="499.90" width="24.80" height="11.10" fill="#3598dc" rx="1.50"/>
<path d="M442.4 503.20 V507.70 M440.2 505.45 H444.6" stroke="#fff" stroke-width="1.3"/>
<text x="445.15" y="507.50" font-size="6.20" fill="#fff" font-weight="bold" textLength="11.84" lengthAdjust="spacingAndGlyphs">Add</text>
<rect x="483.80" y="502.70" width="6.3" height="6.3" fill="#fff" stroke="#e8e8e8" stroke-width="0.9"/>
<rect x="498.80" y="500.00" width="66.40" height="11.10" fill="#3598dc" rx="1.50"/>
<text x="502.91" y="507.70" font-size="6.20" fill="#fff" textLength="58.27" lengthAdjust="spacingAndGlyphs" stroke="#fff" stroke-width="0.12">Change Asset Division</text>
<rect x="692.80" y="502.70" width="6.3" height="6.3" fill="#fff" stroke="#e8e8e8" stroke-width="0.9"/>
<rect x="707.10" y="500.00" width="66.40" height="11.10" fill="#3598dc" rx="1.50"/>
<text x="711.21" y="507.70" font-size="6.20" fill="#fff" textLength="58.27" lengthAdjust="spacingAndGlyphs" stroke="#fff" stroke-width="0.12">Change Asset Division</text>
<rect x="0.00" y="523.00" width="920.00" height="6.00" fill="#f5f5fa"/>
<rect x="911.00" y="0.00" width="9.00" height="529.00" fill="#f5f5fa"/></svg></body></html>
